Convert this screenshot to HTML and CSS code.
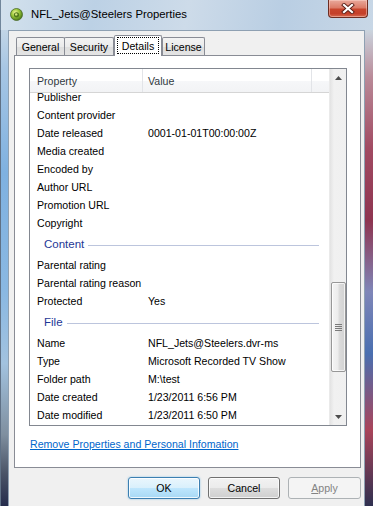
FILE: index.html
```html
<!DOCTYPE html>
<html>
<head>
<meta charset="utf-8">
<link rel="stylesheet" href="styles.css">
</head>
<body>
<div class="window">
  <div class="titlebar">
    <svg class="app-icon" width="13" height="13" viewBox="0 0 13 13">
      <defs>
        <radialGradient id="orb" cx="0.4" cy="0.35" r="0.7">
          <stop offset="0" stop-color="#f4f7a0"/>
          <stop offset="0.45" stop-color="#9cc93a"/>
          <stop offset="1" stop-color="#3d6e14"/>
        </radialGradient>
      </defs>
      <circle cx="6.5" cy="6.5" r="6" fill="url(#orb)" stroke="#4a6a2a" stroke-width="0.8"/>
      <circle cx="6.5" cy="6.8" r="2.6" fill="#51781c"/>
      <circle cx="6.2" cy="6.4" r="1.2" fill="#d8ea80"/>
    </svg>
    <span class="title">NFL_Jets@Steelers Properties</span>
    <div class="close">
      <svg width="14" height="11" viewBox="0 0 14 11">
        <path d="M3 2 L11 9 M11 2 L3 9" stroke="#5a2018" stroke-width="4" stroke-linecap="square"/>
        <path d="M3 2 L11 9 M11 2 L3 9" stroke="#ffffff" stroke-width="2.2" stroke-linecap="square"/>
      </svg>
    </div>
  </div>
  <div class="frame-body">
    <div class="frame-left"></div>
    <div class="client">
      <div class="tabs">
        <div class="tab tab-general">General</div>
        <div class="tab tab-security">Security</div>
        <div class="tab tab-details selected"><span class="focus">Details</span></div>
        <div class="tab tab-license">License</div>
      </div>
      <div class="panel">
        <div class="list">
          <div class="list-main">
            <div class="list-header">
              <div class="hcol hcol-prop">Property</div>
              <div class="hcol hcol-val">Value</div>
              <div class="hcol hcol-rest"></div>
            </div>
            <div class="list-body">
              <div class="rows">
                <div class="row"><span class="p">Publisher</span><span class="v"></span></div>
                <div class="row"><span class="p">Content provider</span><span class="v"></span></div>
                <div class="row"><span class="p">Date released</span><span class="v">0001-01-01T00:00:00Z</span></div>
                <div class="row"><span class="p">Media created</span><span class="v"></span></div>
                <div class="row"><span class="p">Encoded by</span><span class="v"></span></div>
                <div class="row"><span class="p">Author URL</span><span class="v"></span></div>
                <div class="row"><span class="p">Promotion URL</span><span class="v"></span></div>
                <div class="row"><span class="p">Copyright</span><span class="v"></span></div>
                <div class="group"><span class="gname">Content</span><span class="gline"></span></div>
                <div class="row"><span class="p">Parental rating</span><span class="v"></span></div>
                <div class="row"><span class="p">Parental rating reason</span><span class="v"></span></div>
                <div class="row"><span class="p">Protected</span><span class="v">Yes</span></div>
                <div class="group"><span class="gname">File</span><span class="gline"></span></div>
                <div class="row"><span class="p">Name</span><span class="v">NFL_Jets@Steelers.dvr-ms</span></div>
                <div class="row"><span class="p">Type</span><span class="v">Microsoft Recorded TV Show</span></div>
                <div class="row"><span class="p">Folder path</span><span class="v">M:\test</span></div>
                <div class="row"><span class="p">Date created</span><span class="v">1/23/2011 6:56 PM</span></div>
                <div class="row"><span class="p">Date modified</span><span class="v">1/23/2011 6:50 PM</span></div>
              </div>
            </div>
          </div>
          <div class="scrollbar">
            <div class="sb-btn">
              <svg width="7" height="4" viewBox="0 0 7 4"><path d="M0 4 L3.5 0 L7 4 Z" fill="#4d4d4d"/></svg>
            </div>
            <div class="sb-track">
              <div class="sb-thumb">
                <svg width="7" height="7" viewBox="0 0 7 7">
                  <path d="M0 0.5 H7 M0 2.5 H7 M0 4.5 H7 M0 6.5 H7" stroke="#7a7a7a" stroke-width="1"/>
                </svg>
              </div>
            </div>
            <div class="sb-btn">
              <svg width="7" height="4" viewBox="0 0 7 4"><path d="M0 0 L7 0 L3.5 4 Z" fill="#4d4d4d"/></svg>
            </div>
          </div>
        </div>
        <a class="link" href="#">Remove Properties and Personal Infomation</a>
      </div>
      <div class="buttons">
        <div class="btn btn-default">OK</div>
        <div class="btn">Cancel</div>
        <div class="btn btn-disabled"><span class="u">A</span>pply</div>
      </div>
    </div>
    <div class="frame-right"></div>
  </div>
</div>
</body>
</html>
```

FILE: styles.css
```css
* { box-sizing: border-box; }

html, body {
  margin: 0;
  padding: 0;
  width: 373px;
  height: 506px;
  overflow: hidden;
  font-family: "Liberation Sans", Arial, sans-serif;
  font-size: 10.6px;
  color: #000;
}

.window {
  width: 373px;
  height: 506px;
  display: flex;
  flex-direction: column;
  background: #b9cde0;
}

/* ---------- title bar ---------- */
.titlebar {
  height: 30px;
  flex: none;
  display: flex;
  align-items: flex-start;
  background: linear-gradient(100deg, #d3e1ed 0%, #bcd1e5 25%, #cddbe9 50%, #b9cee3 75%, #c8d7e6 100%);
  border-left: 1px solid #71869b;
}

.app-icon {
  margin: 8px 0 0 9px;
  flex: none;
}

.title {
  margin: 7px 0 0 8px;
  font-size: 11.3px;
  line-height: 14px;
  color: #000;
}

.close {
  margin-left: auto;
  margin-right: 5px;
  width: 40px;
  height: 18px;
  border: 1px solid #6d2d22;
  border-top: none;
  border-radius: 0 0 4px 4px;
  background: linear-gradient(to bottom, #e9a99b 0%, #dc7c68 45%, #c8452c 55%, #c5402a 80%, #d66a50 100%);
  display: flex;
  align-items: center;
  justify-content: center;
  box-shadow: inset 0 0 0 1px rgba(255, 220, 210, 0.45);
}

/* ---------- frame ---------- */
.frame-body {
  flex: 1;
  display: flex;
  min-height: 0;
}

.frame-left {
  width: 8px;
  flex: none;
  border-left: 1px solid #5f7186;
  background: linear-gradient(to bottom, #c2d5e6 0%, #a7c6e4 8%, #7fb1e0 30%, #8ab8e2 55%, #a2c2df 70%, #7f8f9f 85%, #4b5568 93%, #252c4c 100%);
}

.frame-right {
  width: 8px;
  flex: none;
  background: linear-gradient(to bottom, #cad4de 0%, #b98a98 10%, #a14a62 25%, #8e3450 40%, #7f86b8 55%, #4a6fb0 68%, #a9445a 84%, #2f3050 100%);
}

.client {
  width: 357px;
  flex: none;
  background: #f0f0f0;
  border: 1px solid #8ea0b2;
  border-bottom: none;
  padding: 4px 3px 0 5px;
  display: flex;
  flex-direction: column;
}

/* ---------- tabs ---------- */
.tabs {
  display: flex;
  align-items: flex-end;
  height: 20px;
  padding-left: 2px;
  flex: none;
}

.tab {
  height: 18px;
  border: 1px solid #898c95;
  border-bottom: none;
  border-radius: 2px 2px 0 0;
  background: linear-gradient(to bottom, #f3f3f3 0%, #ebebeb 50%, #dedede 51%, #e4e4e4 100%);
  display: flex;
  align-items: center;
  justify-content: center;
  line-height: 12px;
  font-size: 10.6px;
  color: #000;
}

.tab-general { width: 49px; }
.tab-security { width: 50px; margin-left: -1px; }
.tab-license { width: 43px; }

.tab.selected {
  width: 48px;
  height: 21px;
  margin-bottom: -1px;
  background: #ffffff;
  position: relative;
  z-index: 1;
  padding: 1px 2px 2px;
}

.focus {
  display: flex;
  align-items: center;
  justify-content: center;
  width: 100%;
  height: 100%;
  border: 1px dotted #000;
}

/* ---------- panel ---------- */
.panel {
  width: 347px;
  height: 413px;
  flex: none;
  background: #ffffff;
  border: 1px solid #898c95;
  padding: 12px 0 0 14px;
}

.list {
  width: 318px;
  height: 358px;
  border: 1px solid #828790;
  display: flex;
  background: #fff;
}

.list-main {
  flex: 1;
  display: flex;
  flex-direction: column;
  min-width: 0;
}

.list-header {
  height: 24px;
  flex: none;
  display: flex;
  background: linear-gradient(to bottom, #ffffff 0%, #ffffff 50%, #f6f7f9 51%, #f2f3f5 100%);
  border-bottom: 1px solid #d5d5d5;
}

.hcol {
  height: 100%;
  display: flex;
  align-items: center;
  color: #303840;
  border-right: 1px solid #e2e4e8;
}

.hcol-prop { width: 113px; padding-left: 7px; }
.hcol-val { width: 169px; padding-left: 5px; }
.hcol-rest { flex: 1; border-right: none; }

.list-body {
  flex: 1;
  overflow: hidden;
}

.rows {
  margin-top: -5px;
}

.row {
  height: 18px;
  display: flex;
  align-items: center;
  white-space: nowrap;
}

.row .p {
  width: 113px;
  padding-left: 7px;
  flex: none;
}

.row .v {
  padding-left: 5px;
}

.group {
  height: 24px;
  display: flex;
  align-items: center;
  padding-left: 14px;
  padding-right: 10px;
}

.gname {
  color: #1e3796;
  font-size: 11.5px;
  line-height: 14px;
}

.gline {
  flex: 1;
  height: 1px;
  margin-left: 4px;
  margin-top: 2px;
  background: #bcc5dd;
}

/* ---------- scrollbar ---------- */
.scrollbar {
  width: 17px;
  flex: none;
  display: flex;
  flex-direction: column;
  background: linear-gradient(to right, #e3e3e3 0%, #f1f1f1 25%, #f0f0f0 100%);
  border-left: 1px solid #eaeaea;
}

.sb-btn {
  height: 17px;
  flex: none;
  display: flex;
  align-items: center;
  justify-content: center;
}

.sb-track {
  flex: 1;
  display: flex;
  flex-direction: column;
  align-items: center;
}

.sb-thumb {
  margin-top: 196px;
  width: 15px;
  height: 90px;
  border: 1px solid #979797;
  border-radius: 2px;
  background: linear-gradient(to right, #f4f4f4 0%, #ececec 45%, #dcdcdc 55%, #d2d2d2 100%);
  display: flex;
  align-items: center;
  justify-content: center;
  box-shadow: inset 0 0 0 1px rgba(255,255,255,0.7);
}

/* ---------- link ---------- */
.link {
  display: block;
  margin-top: 11px;
  margin-left: 1px;
  line-height: 14px;
  color: #0066cc;
  text-decoration: underline;
  font-size: 10.6px;
}

/* ---------- buttons ---------- */
.buttons {
  width: 347px;
  margin-top: 9px;
  display: flex;
  justify-content: flex-end;
  gap: 8px;
  flex: none;
}

.btn {
  width: 72px;
  height: 22px;
  border: 1px solid #707070;
  border-radius: 3px;
  background: linear-gradient(to bottom, #f2f2f2 0%, #ebebeb 50%, #dddddd 51%, #cfcfcf 100%);
  display: flex;
  align-items: center;
  justify-content: center;
  box-shadow: inset 0 0 0 1px rgba(255,255,255,0.75);
  color: #000;
}

.btn-default {
  border-color: #3c7fb1;
  background: linear-gradient(to bottom, #eaf6fd 0%, #d9f0fc 50%, #bee6fd 51%, #a7d9f5 100%);
  box-shadow: inset 0 0 0 1px rgba(255,255,255,0.8), 0 0 2px rgba(60,160,220,0.6);
}

.btn-disabled {
  width: 73px;
  border-color: #adb2b5;
  background: #f4f4f4;
  color: #838383;
  box-shadow: none;
}

.u { text-decoration: underline; }
```
